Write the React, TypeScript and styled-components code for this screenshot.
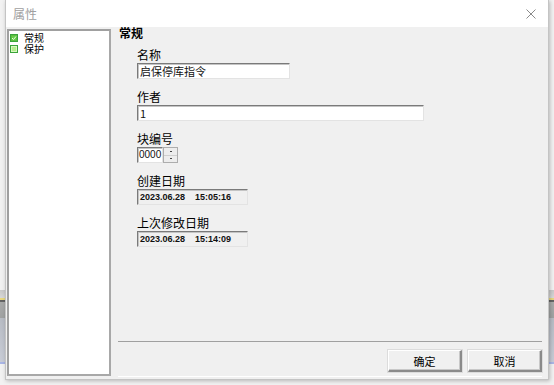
import styled, { createGlobalStyle } from "styled-components";

const GlobalStyle = createGlobalStyle`
    html, body {
        margin: 0;
        padding: 0;
    }
    body {
        width: 554px;
        height: 385px;
        overflow: hidden;
        font-family: "Noto Sans CJK SC", "Liberation Sans", sans-serif;
        background: linear-gradient(
            to bottom,
            #f2f2f2 0,
            #f2f2f2 290px,
            #c9c9c9 290px,
            #d8d8d8 298px,
            #e8d880 298px,
            #e8d880 300px,
            #5e5e5e 300px,
            #6a6a6a 302px,
            #a9aaa9 302px,
            #a0a2a2 318px,
            #b8bcc4 318px,
            #c8ccd6 362px,
            #aab6e6 362px,
            #aab6e6 364px,
            #f2f2f2 364px
        );
    }
`;

const Window = styled.div`
    margin-left: 5px;
    width: 542px;
    height: 379px;
    background: #f0f0f0;
    border: 1px solid #c4c4c4;
    border-top: none;
    box-shadow: 1px 1px 4px rgba(0, 0, 0, 0.25);
    display: flex;
    flex-direction: column;
`;

const TitleBar = styled.div`
    height: 27px;
    background: #fff;
    display: flex;
    align-items: center;
    justify-content: space-between;
    padding: 0 12px 0 7px;
    box-sizing: border-box;
`;

const Title = styled.span`
    font-size: 12px;
    color: #a0a0a0;
`;

const Body = styled.div`
    flex: 1;
    display: flex;
    padding: 2px 0 3px 1px;
    min-height: 0;
`;

const TreePanel = styled.div`
    width: 104px;
    background: #fff;
    border-top: 2px solid #a0a0a0;
    border-left: 2px solid #a0a0a0;
    border-right: 2px solid #a8a8a8;
    border-bottom: 2px solid #a8a8a8;
    box-sizing: border-box;
    padding: 1px 0 0 1px;
`;

const TreeItem = styled.div`
    display: flex;
    align-items: center;
    gap: 6px;
    height: 11px;
    font-size: 10px;
    line-height: 11px;
    color: #000;
`;

const Check = styled.span<{ $checked?: boolean }>`
    width: 6px;
    height: 6px;
    flex-shrink: 0;
    border: 1px solid #3aa43a;
    background: ${(p) => (p.$checked ? "#6acd4a" : "#b4ee8c")};
    box-shadow: inset 0 0 0 1px ${(p) => (p.$checked ? "#5bbf3f" : "#d8f7c0")};
    display: flex;
    align-items: center;
    justify-content: center;
`;

const Main = styled.div`
    flex: 1;
    display: flex;
    flex-direction: column;
    padding: 0 6px 0 7px;
`;

const Section = styled.div`
    flex: 1;
    display: flex;
    flex-direction: column;
`;

const SectionTitle = styled.div`
    font-size: 12px;
    font-weight: bold;
    line-height: 14px;
    margin-top: -3px;
    margin-left: 1px;
`;

const Fields = styled.div`
    display: flex;
    flex-direction: column;
    padding-left: 19px;
    margin-top: 8px;
`;

const Field = styled.div`
    display: flex;
    flex-direction: column;
    margin-bottom: 11px;
`;

const Label = styled.div`
    font-size: 12px;
    line-height: 14px;
    height: 15px;
    color: #000;
`;

const TextBox = styled.div<{ $width: number; $readonly?: boolean }>`
    width: ${(p) => p.$width}px;
    height: 16px;
    flex-shrink: 0;
    box-sizing: border-box;
    background: ${(p) => (p.$readonly ? "#f0f0f0" : "#fff")};
    border-top: 1px solid #7a7a7a;
    border-left: 1px solid #7a7a7a;
    border-right: 1px solid #e3e3e3;
    border-bottom: 1px solid #e3e3e3;
    box-shadow: inset 1px 1px 0 #c4c4c4;
    font-size: ${(p) => (p.$readonly ? "9px" : "11px")};
    font-weight: ${(p) => (p.$readonly ? "bold" : "normal")};
    font-family: ${(p) =>
        p.$readonly ? '"Liberation Sans", "DejaVu Sans", sans-serif' : '"Noto Sans CJK SC", "Liberation Sans", sans-serif'};
    line-height: 14px;
    padding-left: 2px;
    white-space: pre;
    color: #111;
    overflow: hidden;
`;

const SpinRow = styled.div`
    display: flex;
    align-items: stretch;
    width: 41px;
    height: 16px;
`;

const SpinText = styled(TextBox)`
    font-size: 10px;
    font-family: "Liberation Sans", sans-serif;
    padding-left: 1px;
`;

const SpinButtons = styled.div`
    display: flex;
    flex-direction: column;
    flex-shrink: 0;
    width: 15px;
    box-sizing: border-box;
    border: 1px solid #adadad;
`;

const SpinButton = styled.div`
    flex: 1;
    display: flex;
    align-items: center;
    justify-content: center;
    background: #ededed;
    border-bottom: 1px solid #cfcfcf;
    &:last-child {
        border-bottom: none;
    }
`;

const SpinDot = styled.span`
    width: 2px;
    height: 1px;
    background: #444;
`;

const Footer = styled.div`
    display: flex;
    flex-direction: column;
    border-top: 1px solid #a0a0a0;
    box-shadow: 0 1px 0 #fff;
    padding-top: 8px;
    height: 35px;
    box-sizing: border-box;
`;

const ButtonRow = styled.div`
    display: flex;
    justify-content: flex-end;
    gap: 6px;
`;

const Button = styled.button`
    width: 74px;
    height: 22px;
    background: #f0f0f0;
    border-top: 1px solid #fff;
    border-left: 1px solid #fff;
    border-right: 2px solid #8a8a8a;
    border-bottom: 2px solid #8a8a8a;
    box-shadow: inset -1px -1px 0 #c8c8c8, 0 0 0 1px #dcdcdc;
    font-family: "Noto Sans CJK SC", sans-serif;
    font-size: 11px;
    color: #000;
    padding: 0;
`;

function CloseIcon() {
    return (
        <svg width="10" height="10" viewBox="0 0 10 10">
            <path d="M0.5 0.5 L9.5 9.5 M9.5 0.5 L0.5 9.5" stroke="#8a8a8a" strokeWidth="1" />
        </svg>
    );
}

function CheckMark() {
    return (
        <svg width="6" height="6" viewBox="0 0 6 6">
            <path d="M1 3 L2.5 4.5 L5 1.5" stroke="#e8ffe0" strokeWidth="1" fill="none" />
        </svg>
    );
}

function App() {
    return (
        <>
            <GlobalStyle />
            <Window>
                <TitleBar>
                    <Title>属性</Title>
                    <CloseIcon />
                </TitleBar>
                <Body>
                    <TreePanel>
                        <TreeItem>
                            <Check $checked>
                                <CheckMark />
                            </Check>
                            常规
                        </TreeItem>
                        <TreeItem>
                            <Check />
                            保护
                        </TreeItem>
                    </TreePanel>
                    <Main>
                        <Section>
                            <SectionTitle>常规</SectionTitle>
                            <Fields>
                                <Field>
                                    <Label>名称</Label>
                                    <TextBox $width={153}>启保停库指令</TextBox>
                                </Field>
                                <Field>
                                    <Label>作者</Label>
                                    <TextBox $width={287}>1</TextBox>
                                </Field>
                                <Field>
                                    <Label>块编号</Label>
                                    <SpinRow>
                                        <SpinText $width={26}>0000</SpinText>
                                        <SpinButtons>
                                            <SpinButton>
                                                <SpinDot />
                                            </SpinButton>
                                            <SpinButton>
                                                <SpinDot />
                                            </SpinButton>
                                        </SpinButtons>
                                    </SpinRow>
                                </Field>
                                <Field>
                                    <Label>创建日期</Label>
                                    <TextBox $width={111} $readonly>
                                        {"2023.06.28    15:05:16"}
                                    </TextBox>
                                </Field>
                                <Field>
                                    <Label>上次修改日期</Label>
                                    <TextBox $width={111} $readonly>
                                        {"2023.06.28    15:14:09"}
                                    </TextBox>
                                </Field>
                            </Fields>
                        </Section>
                        <Footer>
                            <ButtonRow>
                                <Button>确定</Button>
                                <Button>取消</Button>
                            </ButtonRow>
                        </Footer>
                    </Main>
                </Body>
            </Window>
        </>
    );
}

export default App;
